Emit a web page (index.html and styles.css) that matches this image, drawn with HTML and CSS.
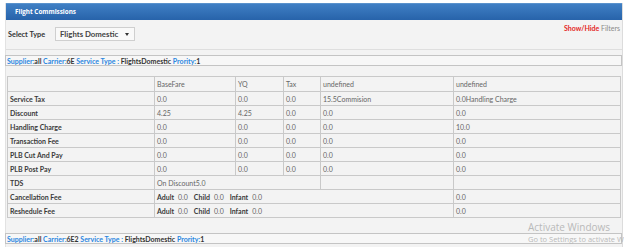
FILE: index.html
```html
<!DOCTYPE html>
<html>
<head>
<meta charset="utf-8">
<link rel="stylesheet" href="styles.css">
</head>
<body>
<div class="panel">
  <div class="panel-head">Flight Commissions</div>
  <div class="filters">
    <div class="filter-row">
      <span class="lbl">Select Type</span>
      <div class="select"><span>Flights Domestic</span><span class="caret"></span></div>
    </div>
    <div class="toggle"><span class="sh">Show/Hide</span> <span class="fl">Filters</span></div>
  </div>
  <div class="body">
    <div class="info"><span class="k">Supplier:</span>all <span class="k">Carrier:</span>6E <span class="k">Service Type :</span> FlightsDomestic <span class="k">Prority:</span>1</div>
    <table class="grid">
      <colgroup>
        <col class="c1"><col class="c2"><col class="c3"><col class="c4"><col class="c5"><col class="c6">
      </colgroup>
      <tr class="hdr"><td></td><td>BaseFare</td><td>YQ</td><td>Tax</td><td>undefined</td><td>undefined</td></tr>
      <tr><th>Service Tax</th><td>0.0</td><td>0.0</td><td>0.0</td><td>15.5Commision</td><td>0.0Handling Charge</td></tr>
      <tr><th>Discount</th><td>4.25</td><td>4.25</td><td>0.0</td><td>0.0</td><td>0.0</td></tr>
      <tr><th>Handling Charge</th><td>0.0</td><td>0.0</td><td>0.0</td><td>0.0</td><td>10.0</td></tr>
      <tr><th>Transaction Fee</th><td>0.0</td><td>0.0</td><td>0.0</td><td>0.0</td><td>0.0</td></tr>
      <tr><th>PLB Cut And Pay</th><td>0.0</td><td>0.0</td><td>0.0</td><td>0.0</td><td>0.0</td></tr>
      <tr><th>PLB Post Pay</th><td>0.0</td><td>0.0</td><td>0.0</td><td>0.0</td><td>0.0</td></tr>
      <tr><th>TDS</th><td colspan="3">On Discount5.0</td><td></td><td></td><td></td></tr>
      <tr><th>Cancellation Fee</th><td colspan="4" class="pax"><b>Adult</b><span>0.0</span><b>Child</b><span>0.0</span><b>Infant</b><span>0.0</span></td><td>0.0</td></tr>
      <tr><th>Reshedule Fee</th><td colspan="4" class="pax"><b>Adult</b><span>0.0</span><b>Child</b><span>0.0</span><b>Infant</b><span>0.0</span></td><td>0.0</td></tr>
    </table>
    <div class="info"><span class="k">Supplier:</span>all <span class="k">Carrier:</span>6E2 <span class="k">Service Type :</span> FlightsDomestic <span class="k">Prority:</span>1</div>
  </div>
</div>
<div class="activate">
  <div class="a1">Activate Windows</div>
  <div class="a2">Go to Settings to activate W</div>
</div>
</body>
</html>
```

FILE: styles.css
```css
html, body {
  margin: 0;
  padding: 0;
  background: #ffffff;
  overflow: hidden;
  height: 247px;
}
body {
  font-family: Lato, "Open Sans", sans-serif;
  font-size: 7px;
  color: #555;
  padding-top: 3px;
  position: relative;
}
.panel {
  margin-left: 5px;
  width: 616px;
  background: #f3f3f3;
  border-left: 1px solid #e2e2e2;
  border-right: 1px solid #dcdcdc;
}
.panel-head {
  height: 17px;
  line-height: 16px;
  background: linear-gradient(#3f7fc4, #2763aa);
  border-top: 1px solid #5a92cc;
  box-sizing: border-box;
  color: #fff;
  font-family: "Open Sans", Lato, sans-serif;
  font-weight: 700;
  padding-left: 9px;
  font-size: 6.3px;
}
.filters {
  display: flex;
  justify-content: space-between;
  align-items: flex-start;
  height: 30px;
  border-bottom: 1px solid #dedede;
  box-sizing: border-box;
}
.filter-row {
  display: flex;
  align-items: center;
  margin-top: 7px;
  margin-left: 2px;
}
.lbl {
  font-weight: 700;
  color: #333;
  width: 47px;
  font-size: 7.3px;
}
.select {
  width: 80px;
  height: 14px;
  box-sizing: border-box;
  border: 1px solid #cfcfcf;
  background: #f9f9f9;
  display: flex;
  align-items: center;
  justify-content: space-between;
  padding: 0 5px 0 4px;
  color: #444;
  font-weight: 700;
  font-size: 7.8px;
}
.caret {
  width: 0;
  height: 0;
  border-left: 2px solid transparent;
  border-right: 2px solid transparent;
  border-top: 3px solid #333;
}
.toggle {
  margin-top: 4px;
  margin-right: 2px;
  font-weight: 700;
}
.sh { color: #e41f1f; }
.fl { color: #8a8a8a; font-weight: 400; }
.body {
  padding: 5px 0 3px 0;
}
.info {
  border: 1px solid #c4c4c4;
  background: #f7f7f7;
  height: 11px;
  line-height: 10px;
  box-sizing: border-box;
  padding-left: 1px;
  font-weight: 700;
  color: #333;
  font-size: 7px;
  margin: 0 0 0 -1px;
}
.k { color: #2a86e0; }
.grid {
  border-collapse: collapse;
  table-layout: fixed;
  width: 613px;
  margin: 10px 0 15px 1px;
}
.c1 { width: 147px; }
.c2 { width: 81px; }
.c3 { width: 48px; }
.c4 { width: 37px; }
.c5 { width: 133px; }
.c6 { width: 167px; }
.grid td, .grid th {
  border: 1px solid #c9c9c9;
  height: 13px;
  padding: 0 2px;
  text-align: left;
  font-size: 7px;
  line-height: 12px;
  white-space: nowrap;
  overflow: hidden;
}
.grid tr.hdr td { height: 14px; }
.grid th {
  font-weight: 700;
  color: #3a3a3a;
}
.grid td { color: #666; }
.pax b { color: #3a3a3a; margin-right: 4px; font-weight: 700; }
.pax span { margin-right: 6px; }
.activate {
  position: absolute;
  left: 528px;
  top: 221px;
  color: #b9b9b9;
  font-family: "Open Sans", Lato, sans-serif;
  white-space: nowrap;
}
.a1 { font-size: 10px; line-height: 13px; }
.a2 { font-size: 7.5px; line-height: 10px; }
```
